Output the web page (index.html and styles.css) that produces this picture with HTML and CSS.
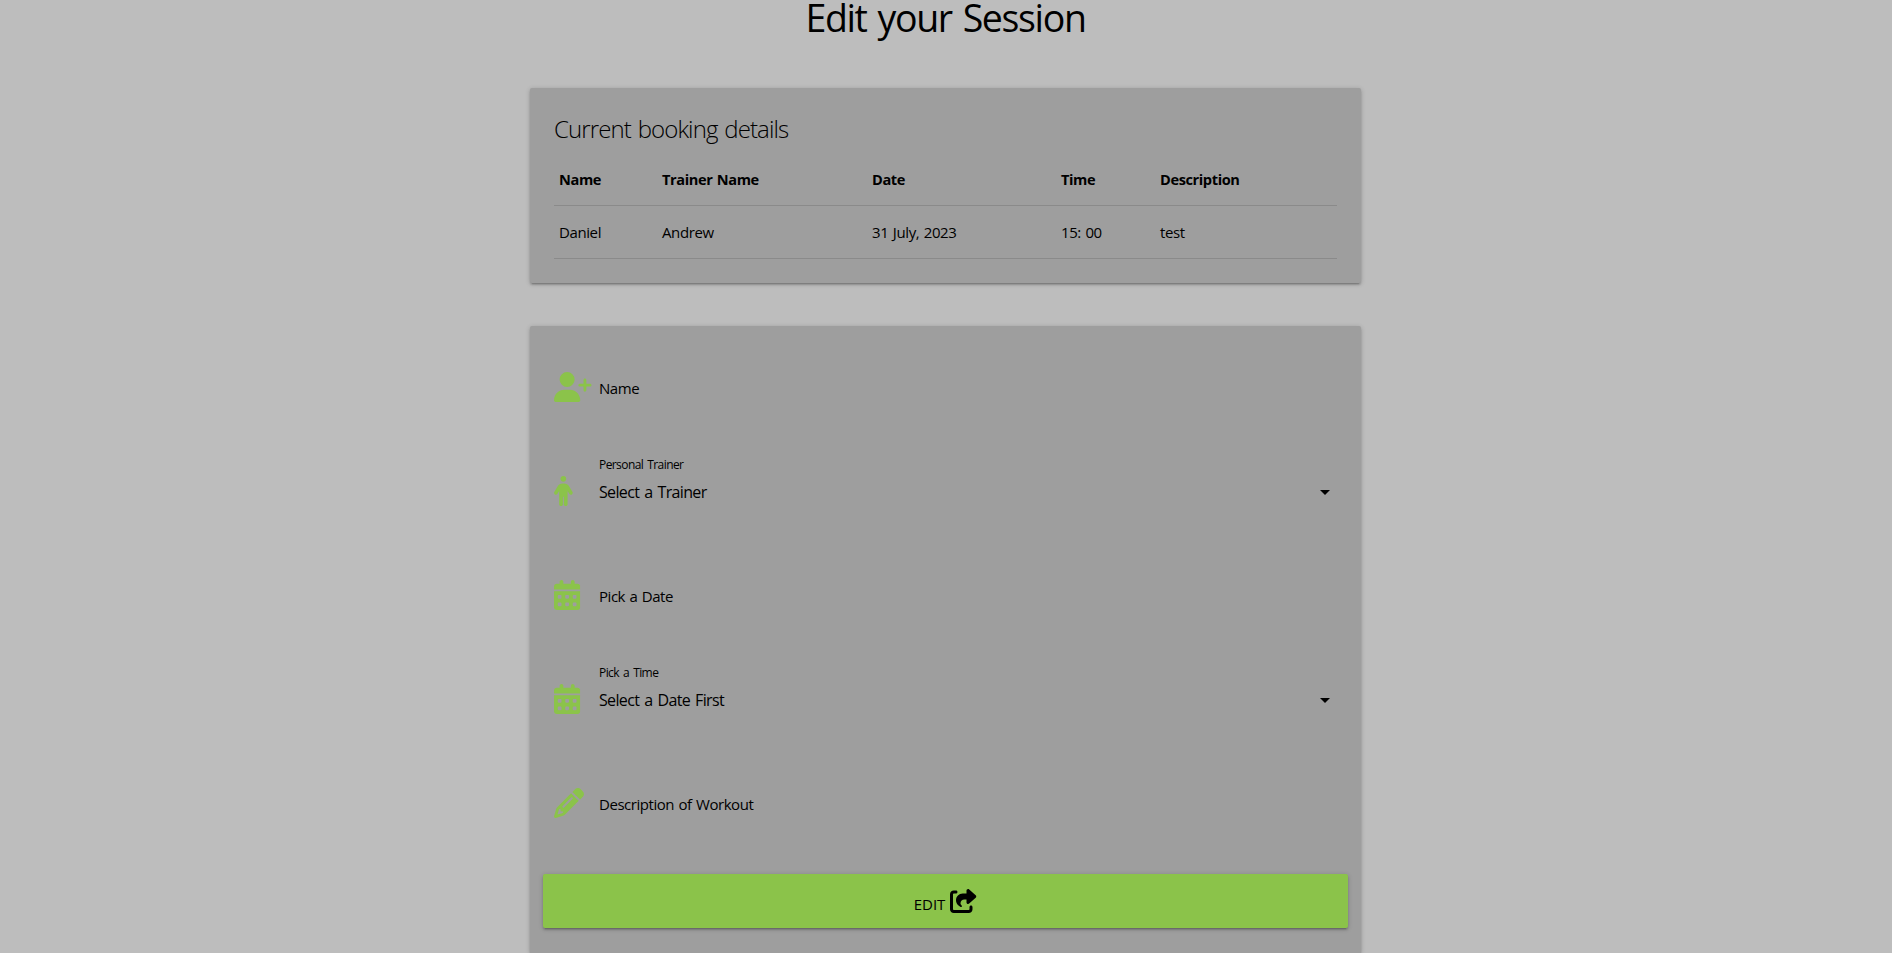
FILE: index.html
```html
<!DOCTYPE html>
<html lang="en">
<head>
<meta charset="utf-8">
<title>Edit your Session</title>
<link rel="stylesheet" href="styles.css">
</head>
<body>
<svg class="sprite" aria-hidden="true">
  <symbol id="calendar" viewBox="0 0 448 512"><path d="M128 0c17.7 0 32 14.3 32 32V64H288V32c0-17.7 14.3-32 32-32s32 14.3 32 32V64h48c26.500 0 48 21.500 48 48v48H0V112C0 85.500 21.500 64 48 64H96V32c0-17.700 14.300-32 32-32zM0 192H448V464c0 26.500-21.500 48-48 48H48c-26.500 0-48-21.500-48-48V192zm64 80v32c0 8.800 7.200 16 16 16h32c8.800 0 16-7.200 16-16V272c0-8.800-7.200-16-16-16H80c-8.800 0-16 7.200-16 16zm128 0v32c0 8.800 7.200 16 16 16h32c8.800 0 16-7.200 16-16V272c0-8.800-7.200-16-16-16H208c-8.800 0-16 7.200-16 16zm144-16c-8.800 0-16 7.200-16 16v32c0 8.800 7.200 16 16 16h32c8.800 0 16-7.200 16-16V272c0-8.800-7.200-16-16-16H336zM64 400v32c0 8.800 7.200 16 16 16h32c8.800 0 16-7.200 16-16V400c0-8.800-7.200-16-16-16H80c-8.800 0-16 7.200-16 16zm144-16c-8.800 0-16 7.200-16 16v32c0 8.800 7.200 16 16 16h32c8.800 0 16-7.200 16-16V400c0-8.800-7.200-16-16-16H208zm112 16v32c0 8.800 7.200 16 16 16h32c8.800 0 16-7.200 16-16V400c0-8.800-7.200-16-16-16H336c-8.800 0-16 7.200-16 16z"/></symbol>
</svg>
<main class="container">
  <h1 class="page-title">Edit your Session</h1>

  <section class="card details">
    <h2 class="card-title">Current booking details</h2>
    <table class="booking">
      <colgroup><col class="c-name"><col class="c-trainer"><col class="c-date"><col class="c-time"><col></colgroup>
      <thead><tr><th>Name</th><th>Trainer Name</th><th>Date</th><th>Time</th><th>Description</th></tr></thead>
      <tbody><tr><td>Daniel</td><td>Andrew</td><td>31 July, 2023</td><td>15: 00</td><td>test</td></tr></tbody>
    </table>
  </section>

  <form class="card form">
    <div class="field">
      <svg class="icon" viewBox="0 0 640 512" preserveAspectRatio="xMinYMid"><path d="M96 128a128 128 0 1 1 256 0A128 128 0 1 1 96 128zM0 482.300C0 383.800 79.800 304 178.300 304h91.400C368.200 304 448 383.800 448 482.300c0 16.400-13.300 29.700-29.700 29.700H29.700C13.300 512 0 498.700 0 482.300zM504 312V248H440c-13.300 0-24-10.700-24-24s10.700-24 24-24h64V136c0-13.300 10.700-24 24-24s24 10.700 24 24v64h64c13.300 0 24 10.700 24 24s-10.700 24-24 24H552v64c0 13.300-10.700 24-24 24s-24-10.700-24-24z"/></svg>
      <div class="control"><span class="placeholder">Name</span></div>
    </div>
    <div class="field">
      <svg class="icon" viewBox="0 0 320 512" preserveAspectRatio="xMinYMid"><path d="M112 48a48 48 0 1 1 96 0 48 48 0 1 1 -96 0zm40 304V480c0 17.700-14.300 32-32 32s-32-14.300-32-32V256.900L59.400 304.500c-9.100 15.100-28.800 20-43.900 10.900s-20-28.800-10.900-43.900l58.300-97c17.400-28.900 48.600-46.600 82.300-46.600h29.700c33.700 0 64.900 17.700 82.300 46.600l58.300 97c9.100 15.100 4.200 34.800-10.900 43.900s-34.800 4.200-43.900-10.900L232 256.900V480c0 17.700-14.300 32-32 32s-32-14.300-32-32V352H152z"/></svg>
      <div class="control"><span class="label">Personal Trainer</span><span class="value">Select a Trainer</span></div>
      <svg class="caret" viewBox="0 0 24 24"><path d="M7 10l5 5 5-5z"/></svg>
    </div>
    <div class="field">
      <svg class="icon" viewBox="0 0 448 512" preserveAspectRatio="xMinYMid"><use href="#calendar" width="448" height="512"/></svg>
      <div class="control"><span class="placeholder">Pick a Date</span></div>
    </div>
    <div class="field">
      <svg class="icon" viewBox="0 0 448 512" preserveAspectRatio="xMinYMid"><use href="#calendar" width="448" height="512"/></svg>
      <div class="control"><span class="label">Pick a Time</span><span class="value">Select a Date First</span></div>
      <svg class="caret" viewBox="0 0 24 24"><path d="M7 10l5 5 5-5z"/></svg>
    </div>
    <div class="field">
      <svg class="icon" viewBox="0 0 512 512" preserveAspectRatio="xMinYMid"><path d="M410.300 231l11.300-11.300-33.900-33.900-62.100-62.100L291.700 89.800l-11.300 11.300-22.600 22.600L58.600 322.900c-10.400 10.400-18 23.300-22.200 37.400L1 480.700c-2.500 8.400-.2 17.500 6.100 23.700s15.300 8.500 23.700 6.100l120.300-35.400c14.100-4.200 27-11.800 37.400-22.200L387.700 253.700 410.300 231zM160 399.400l-9.100 22.700c-4 3.100-8.500 5.400-13.300 6.900L59.400 452l23-78.100c1.400-4.900 3.800-9.400 6.900-13.300l22.700-9.100v32c0 8.800 7.200 16 16 16h32zM362.700 18.700L348.300 33.200 325.700 55.800 314.300 67.100l33.900 33.900 62.100 62.100 33.900 33.900 11.300-11.300 22.600-22.600 14.500-14.500c25-25 25-65.500 0-90.500L453.300 18.700c-25-25-65.500-25-90.500 0zm-47.400 168l-144 144c-6.200 6.200-16.400 6.200-22.600 0s-6.200-16.400 0-22.600l144-144c6.200-6.200 16.400-6.200 22.600 0s6.200 16.400 0 22.600z"/></svg>
      <div class="control"><span class="placeholder">Description of Workout</span></div>
    </div>
    <button class="submit" type="button"><span class="submit-text">EDIT</span>
      <svg class="share" viewBox="0 0 576 512"><path d="M352 224H305.500c-45 0-81.500 36.500-81.500 81.500c0 22.300 10.300 34.300 19.200 40.500c6.800 4.700 12.800 12 12.800 20.300c0 9.800-8 17.800-17.800 17.800h-2.500c-2.400 0-4.800-.4-7.100-1.400C210.800 374.800 128 333.400 128 240c0-79.500 64.500-144 144-144h80V34.700C352 15.500 367.500 0 386.700 0c8.600 0 16.800 3.200 23.200 8.900L548.100 133.300c7.600 6.800 11.900 16.500 11.900 26.700s-4.300 19.900-11.900 26.700l-139 125.100c-5.900 5.300-13.500 8.200-21.400 8.200H384c-17.700 0-32-14.300-32-32V224zM80 96c-8.800 0-16 7.200-16 16V432c0 8.800 7.200 16 16 16H400c8.800 0 16-7.200 16-16V384c0-17.700 14.300-32 32-32s32 14.300 32 32v48c0 44.200-35.800 80-80 80H80c-44.200 0-80-35.800-80-80V112C0 67.800 35.800 32 80 32h48c17.700 0 32 14.300 32 32s-14.300 32-32 32H80z"/></svg>
    </button>
  </form>
</main>
</body>
</html>
```
FILE: styles.css
```css
* { box-sizing: border-box; }
html { overflow: hidden; }
body {
  margin: 0;
  padding-right: 1px;
  height: 953px;
  overflow: hidden;
  background: #bdbdbd;
  color: #000;
  font: 15px/22.5px "Open Sans", "Noto Sans", sans-serif;
}
.sprite { display: none; }
.container { width: 831px; margin: 0 auto; }
.page-title {
  margin: 0 0 46px;
  height: 42px;
  font-size: 37.5px;
  line-height: 35px;
  font-weight: 400;
  letter-spacing: -1.35px;
  word-spacing: 2.5px;
  text-align: center;
  white-space: nowrap;
}
.card {
  background: #9e9e9e;
  border-radius: 2px;
  box-shadow: 0 2px 2px 0 rgba(0,0,0,.14), 0 3px 1px -2px rgba(0,0,0,.12), 0 1px 5px 0 rgba(0,0,0,.2);
}
.details { height: 195px; padding: 25px 24px 24px; margin-bottom: 43px; }
.card-title {
  margin: 0 0 7px;
  font-size: 24px;
  line-height: 32px;
  font-weight: 300;
  letter-spacing: -.9px;
  word-spacing: 1.5px;
}
.booking { width: 783px; table-layout: fixed; border-collapse: collapse; }
.booking tr { height: 53px; border-bottom: 1px solid rgba(0,0,0,.12); }
.booking th, .booking td { padding: 2px 5px 0; text-align: left; word-spacing: 1px; letter-spacing: -.4px; }
.booking th { padding-top: 1px; font-weight: 700; font-size: 14.6px; }
.c-name { width: 103px; }
.c-trainer { width: 210px; }
.c-date { width: 189px; }
.c-time { width: 99px; }
.form { height: 627px; padding: 29px 13px 0; border-radius: 2px 2px 0 0; }
.field {
  display: flex;
  align-items: flex-start;
  height: 104px;
  padding: 16.7px 11px 0 11px;
}
.icon { flex: none; width: 45px; height: 30px; fill: #8bc34a; }
.control {
  flex: 1;
  display: flex;
  flex-direction: column;
  justify-content: flex-end;
  height: 28.3px;
}
.label { font-size: 12px; line-height: 18px; letter-spacing: -.58px; word-spacing: 1.5px; margin-bottom: 6px; }
.value { font-size: 16px; line-height: 24px; letter-spacing: -.65px; word-spacing: 1.5px; }
.placeholder { font-size: 15px; line-height: 24px; letter-spacing: -.46px; word-spacing: 1px; }
.caret { width: 24px; height: 24px; margin-top: 4.3px; }
.submit {
  display: flex;
  align-items: center;
  justify-content: center;
  gap: 5px;
  width: 805px;
  height: 54px;
  margin-top: -1px;
  border: 0;
  border-radius: 2px;
  background: #8bc34a;
  color: #000;
  font: 15px/24px "Open Sans", "Noto Sans", sans-serif;
  box-shadow: 0 2px 2px 0 rgba(0,0,0,.14), 0 3px 1px -2px rgba(0,0,0,.12), 0 1px 5px 0 rgba(0,0,0,.2);
}
.submit-text { padding-top: 5px; }
.share { width: 27px; height: 24px; }
```
